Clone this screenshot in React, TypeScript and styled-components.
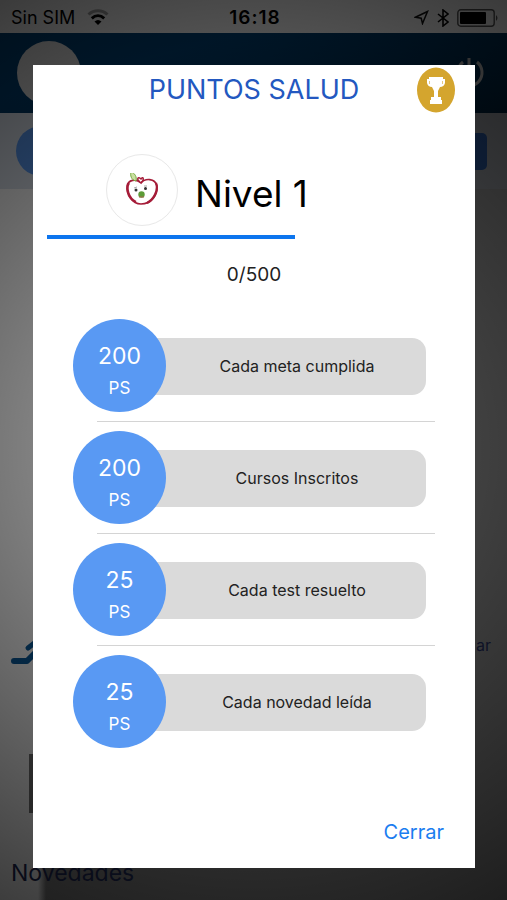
import React from "react";
import styled, { createGlobalStyle } from "styled-components";

const Global = createGlobalStyle`
  * { box-sizing: border-box; }
  body { margin: 0; background: #fff; font-family: Inter, "Liberation Sans", sans-serif; }
`;

const Screen = styled.div`
  position: relative;
  min-height: 100vh;
  display: flex;
  flex-direction: column;
  overflow: hidden;
`;

const StatusBar = styled.div`
  height: 33px;
  flex: none;
  display: grid;
  grid-template-columns: 1fr auto 1fr;
  align-items: center;
  padding: 2px 8px 0 11px;
  background: #f4f4f4;
  color: #000;
  font-size: 18px;
`;

const StatusGroup = styled.div<{ $end?: boolean }>`
  display: flex;
  align-items: center;
  gap: ${(p) => (p.$end ? 8 : 12)}px;
  justify-content: ${(p) => (p.$end ? "flex-end" : "flex-start")};
`;

const Clock = styled.time`
  font-weight: 600;
  font-size: 19px;
  letter-spacing: 1px;
`;

const AppHeader = styled.header`
  height: 80px;
  flex: none;
  display: flex;
  align-items: center;
  justify-content: space-between;
  padding: 0 20px 0 17px;
  background: linear-gradient(165deg, #004074 30%, #001c32);
  color: #aaa;
`;

const HeaderAvatar = styled.div`
  width: 64px;
  height: 64px;
  border-radius: 50%;
  background: #ddd;
`;

const PowerButton = styled.button`
  padding: 0;
  border: 0;
  background: none;
  color: inherit;
  line-height: 0;
`;

const Summary = styled.section`
  height: 76px;
  flex: none;
  display: flex;
  align-items: center;
  justify-content: space-between;
  padding: 0 20px 0 16px;
  background: linear-gradient(to right, #dde4ee 38px, #85888d 44px);
`;

const SummaryDot = styled.div`
  width: 50px;
  height: 50px;
  border-radius: 50%;
  background: #5b9bf4;
`;

const SummaryTag = styled.div`
  width: 60px;
  height: 37px;
  border-radius: 5px;
  background: #234a87;
`;

const Feed = styled.main`
  flex: 1;
  display: flex;
  flex-direction: column;
  justify-content: flex-end;
  padding: 0 16px 11px 11px;
  background: linear-gradient(to right, #fff 38px, #808080 46px);
  color: #1f2a58;
`;

const FeedRow = styled.div`
  display: flex;
  align-items: flex-start;
  justify-content: space-between;
  font-size: 16px;
  line-height: 24px;
`;

const FeedMark = styled.div`
  width: 8px;
  height: 59px;
  margin: 86px 0 44px 18px;
  background: #777;
`;

const FeedTitle = styled.h2`
  margin: 0;
  font-size: 23px;
  line-height: 32px;
  font-weight: 400;
`;

const Backdrop = styled.div`
  position: absolute;
  inset: 0;
  display: flex;
  padding: 65px 32px 32px 33px;
  background: radial-gradient(circle farthest-corner, rgba(0, 0, 0, 0.3), rgba(0, 0, 0, 0.76));
`;

const Dialog = styled.div`
  flex: 1;
  display: flex;
  flex-direction: column;
  background: #fff;
  color: #000;
`;

const DialogHeader = styled.div`
  height: 50px;
  display: grid;
  grid-template-columns: 1fr auto 1fr;
  align-items: center;
  padding: 0 20px;
`;

const Title = styled.h1`
  grid-column: 2;
  margin: 0;
  color: #2358c0;
  font-size: 27px;
  line-height: 48px;
  font-weight: 400;
`;

const Trophy = styled.svg`
  justify-self: end;
  width: 38px;
  height: 46px;
`;

const Level = styled.div`
  display: flex;
  align-items: center;
  gap: 17px;
  padding: 39px 0 9px 73px;
`;

const LevelBadge = styled.div`
  width: 72px;
  height: 72px;
  display: grid;
  place-items: center;
  border: 1px solid #e8e8e8;
  border-radius: 50%;
`;

const LevelName = styled.div`
  font-size: 37px;
  line-height: 64px;
  padding-top: 8px;
`;

const Track = styled.div`
  width: 56%;
  height: 4px;
  margin: 0 14px;
  background: #0d75ee;
`;

const Score = styled.div`
  margin: 23px 0 31px;
  text-align: center;
  font-size: 19px;
  line-height: 26px;
  color: #222;
`;

const Rewards = styled.ul`
  list-style: none;
  margin: 0;
  padding: 0 40px;
  display: flex;
  flex-direction: column;
  gap: 9px;
`;

const Reward = styled.li`
  &:not(:last-child)::after {
    content: "";
    display: block;
    height: 1px;
    margin: 9px 0 0 24px;
    background: #d4d4d4;
  }
`;

const RewardLine = styled.div`
  display: flex;
  align-items: center;
  padding-right: 9px;
`;

const Points = styled.div`
  flex: none;
  width: 93px;
  height: 93px;
  border-radius: 50%;
  background: #5999f3;
  color: #fff;
  display: flex;
  flex-direction: column;
  align-items: center;
  padding-top: 21px;
  font-size: 23px;
  line-height: 32px;
  z-index: 1;
`;

const Unit = styled.span`
  font-size: 17px;
`;

const RewardLabel = styled.div`
  flex: 1;
  height: 57px;
  margin: 2px 0 0 -40px;
  padding-left: 42px;
  border-radius: 0 14px 14px 0;
  background: #dadada;
  color: #222;
  text-align: center;
  font-size: 16px;
  line-height: 57px;
`;

const Footer = styled.div`
  margin-top: auto;
  padding: 0 31px 20px;
  display: flex;
  justify-content: flex-end;
`;

const CloseButton = styled.button`
  padding: 0;
  border: 0;
  background: none;
  color: #1a7df0;
  font: inherit;
  font-size: 20px;
  line-height: 32px;
`;

const WifiIcon = () => (
  <svg width="22" height="17" viewBox="0 0 22 17" fill="none" stroke="#000" strokeWidth="3">
    <path d="M1.5 5.5C7 .5 15 .5 20.500 5.500" opacity=".35" />
    <path d="M4.800 9.300C8.500 6 13.500 6 17.200 9.300" />
    <path d="M11 16L7.500 12.500Q11 9.500 14.500 12.500Z" fill="#000" stroke="none" />
  </svg>
);

const LocationIcon = () => (
  <svg width="15" height="15" viewBox="0 0 15 15" fill="none" stroke="#111" strokeWidth="1.500">
    <path d="M13.500 1.500L1.500 7.200L7.200 8.200L8.500 13.500Z" />
  </svg>
);

const BluetoothIcon = () => (
  <svg width="12" height="18" viewBox="0 0 12 18" fill="none" stroke="#000" strokeWidth="1.600">
    <path d="M1 5L11 13L6 17V1L11 5L1 13" />
  </svg>
);

const BatteryIcon = () => (
  <svg width="42" height="18" viewBox="0 0 42 18">
    <rect x=".8" y=".8" width="36.400" height="16.400" rx="3" fill="none" stroke="#555" strokeWidth="1.400" />
    <rect x="3" y="3" width="26" height="12" rx="1" fill="#000" />
    <path d="M39 6Q42 9 39 12Z" fill="#555" />
  </svg>
);

const PowerIcon = () => (
  <svg width="32" height="32" viewBox="0 0 32 32" fill="none" stroke="currentColor" strokeWidth="3">
    <path d="M14 1V15M8 5A12 13 0 1 0 22 5" />
  </svg>
);

const ShoeIcon = () => (
  <svg width="42" height="35" viewBox="0 0 42 35" fill="none" stroke="#0a5c9e" strokeLinecap="round" strokeLinejoin="round">
    <path d="M3 28H16L24 20" strokeWidth="6" />
    <path d="M17 15L26 8" strokeWidth="5" />
  </svg>
);

const AppleIcon = () => (
  <svg width="34" height="34" viewBox="0 0 34 34" fill="none">
    <path d="M16 10C11 5 3 7 2 13C1 21 7 31 16 31C26 31 33 22 32 13C30 5 20 5 16 10Z" stroke="#a51c38" strokeWidth="1.600" />
    <path d="M4 10C1 15 3 25 11 29M31 10C34 18 28 27 22 30" stroke="#a51c38" strokeWidth="2.200" />
    <path d="M11 8C6 7 5 2 6 -1C10 0 12 4 11 8Z" fill="#c9df9f" stroke="#73a83e" />
    <path d="M15 9C11 6 13 3 16 6C18 3 20 6 16 10" stroke="#a51c38" strokeWidth="1.400" />
    <circle cx="11" cy="17" r="1.500" fill="#333" />
    <circle cx="20.500" cy="15.500" r="1.500" fill="#333" />
    <path d="M9 15L12 14M19 13L22 13" stroke="#aaa" />
    <circle cx="16.500" cy="21.500" r="3.200" fill="#5d9c38" />
    <path d="M14 24L19 24" stroke="#a86450" />
  </svg>
);

const TrophyIcon = () => (
  <Trophy viewBox="0 0 38 46" role="img" aria-label="Trofeo">
    <ellipse cx="19" cy="23" rx="19" ry="22.500" fill="#d4a52e" />
    <path d="M12 10H26V12H28V16Q27 20 23 20L21 24V30H24V33H25V37H13V33H14V30H17V24L15 20Q11 20 10 16V12H12Z" fill="#fff" />
    <path d="M12.500 14V17M25.500 14V17" stroke="#d4a52e" strokeOpacity=".6" />
  </Trophy>
);

const rewards = [
  { points: 200, label: "Cada meta cumplida" },
  { points: 200, label: "Cursos Inscritos" },
  { points: 25, label: "Cada test resuelto" },
  { points: 25, label: "Cada novedad leída" },
];

export default function App() {
  return (
    <Screen>
      <Global />
      <StatusBar>
        <StatusGroup>
          <span>Sin SIM</span>
          <WifiIcon />
        </StatusGroup>
        <Clock>16:18</Clock>
        <StatusGroup $end>
          <LocationIcon />
          <BluetoothIcon />
          <BatteryIcon />
        </StatusGroup>
      </StatusBar>
      <AppHeader>
        <HeaderAvatar />
        <PowerButton aria-label="Salir">
          <PowerIcon />
        </PowerButton>
      </AppHeader>
      <Summary>
        <SummaryDot />
        <SummaryTag />
      </Summary>
      <Feed>
        <FeedRow>
          <ShoeIcon />
          <span>ar</span>
        </FeedRow>
        <FeedMark />
        <FeedTitle>Novedades</FeedTitle>
      </Feed>
      <Backdrop>
        <Dialog role="dialog" aria-modal="true" aria-labelledby="dialog-title">
          <DialogHeader>
            <Title id="dialog-title">PUNTOS SALUD</Title>
            <TrophyIcon />
          </DialogHeader>
          <Level>
            <LevelBadge>
              <AppleIcon />
            </LevelBadge>
            <LevelName>Nivel 1</LevelName>
          </Level>
          <Track />
          <Score>0/500</Score>
          <Rewards>
            {rewards.map((r) => (
              <Reward key={r.label}>
                <RewardLine>
                  <Points>
                    {r.points}
                    <Unit>PS</Unit>
                  </Points>
                  <RewardLabel>{r.label}</RewardLabel>
                </RewardLine>
              </Reward>
            ))}
          </Rewards>
          <Footer>
            <CloseButton>Cerrar</CloseButton>
          </Footer>
        </Dialog>
      </Backdrop>
    </Screen>
  );
}
